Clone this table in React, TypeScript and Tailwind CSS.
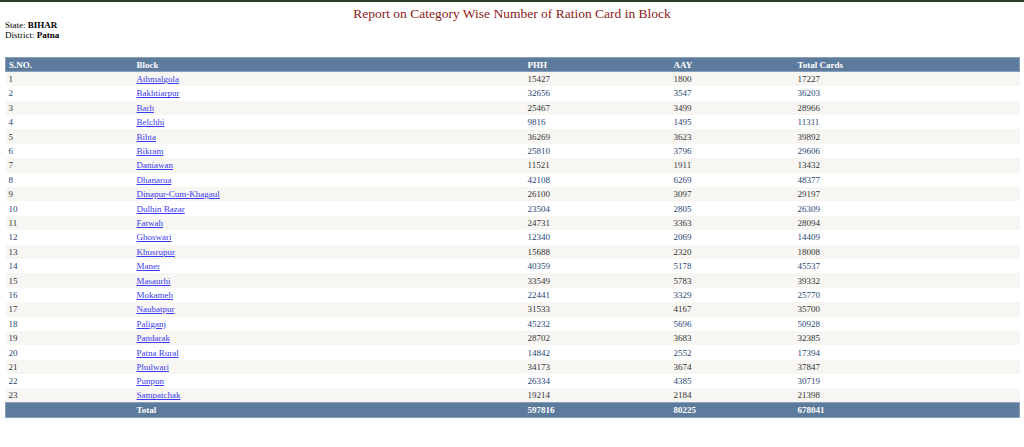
const rows: [string, number, number, number][] = [
  ["Athmalgola", 15427, 1800, 17227],
  ["Bakhtiarpur", 32656, 3547, 36203],
  ["Barh", 25467, 3499, 28966],
  ["Belchhi", 9816, 1495, 11311],
  ["Bihta", 36269, 3623, 39892],
  ["Bikram", 25810, 3796, 29606],
  ["Daniawan", 11521, 1911, 13432],
  ["Dhanarua", 42108, 6269, 48377],
  ["Dinapur-Cum-Khagaul", 26100, 3097, 29197],
  ["Dulhin Bazar", 23504, 2805, 26309],
  ["Fatwah", 24731, 3363, 28094],
  ["Ghoswari", 12340, 2069, 14409],
  ["Khusrupur", 15688, 2320, 18008],
  ["Maner", 40359, 5178, 45537],
  ["Masaurhi", 33549, 5783, 39332],
  ["Mokameh", 22441, 3329, 25770],
  ["Naubatpur", 31533, 4167, 35700],
  ["Paliganj", 45232, 5696, 50928],
  ["Pandarak", 28702, 3683, 32385],
  ["Patna Rural", 14842, 2552, 17394],
  ["Phulwari", 34173, 3674, 37847],
  ["Punpun", 26334, 4385, 30719],
  ["Sampatchak", 19214, 2184, 21398],
];

export default function App() {
  return (
    <div className="min-h-[447px] bg-white border-t-2 border-[#2e3d2c] font-['Liberation_Serif','Times_New_Roman',serif] text-black">
      <h1 className="pt-[6px] text-center font-normal text-[13.5px] leading-[12px] text-[#8b2020]">
        Report on Category Wise Number of Ration Card in Block
      </h1>
      <div className="px-[5px] text-[9px] leading-[10px]">
        <div>
          State: <b>BIHAR</b>
        </div>
        <div>
          District: <b>Patna</b>
        </div>
      </div>

      <div className="pl-[5px] pr-[4px] pt-[17px]">
        <table className="w-full border-collapse text-[9px] leading-[10px] table-fixed">
          <colgroup>
            <col className="w-[128px]" />
            <col className="w-[391px]" />
            <col className="w-[146px]" />
            <col className="w-[124px]" />
            <col />
          </colgroup>
          <thead>
            <tr className="h-[14.4px] bg-[#5d7b9d] text-white font-bold text-left border border-[#8aa0ba]">
              <th className="px-[3px]">S.NO.</th>
              <th className="px-[3px]">Block</th>
              <th className="px-[3px]">PHH</th>
              <th className="px-[3px]">AAY</th>
              <th className="px-[3px]">Total Cards</th>
            </tr>
          </thead>
          <tbody>
            {rows.map((r, i) => (
              <tr
                key={r[0]}
                className={
                  "h-[14.4px] " +
                  (i % 2 === 0 ? "bg-[#f7f6f3] text-[#333333]" : "bg-white text-[#284775]")
                }
              >
                <td className="px-[3px]">{i + 1}</td>
                <td className="px-[3px]">
                  <a href="#" className="text-[#3b3bf0] underline">
                    {r[0]}
                  </a>
                </td>
                <td className="px-[3px]">{r[1]}</td>
                <td className="px-[3px]">{r[2]}</td>
                <td className="px-[3px]">{r[3]}</td>
              </tr>
            ))}
          </tbody>
          <tfoot>
            <tr className="h-[14.4px] bg-[#5d7b9d] text-white font-bold border border-[#8aa0ba]">
              <td className="px-[3px]"></td>
              <td className="px-[3px]">Total</td>
              <td className="px-[3px]">597816</td>
              <td className="px-[3px]">80225</td>
              <td className="px-[3px]">678041</td>
            </tr>
          </tfoot>
        </table>
      </div>
    </div>
  );
}
